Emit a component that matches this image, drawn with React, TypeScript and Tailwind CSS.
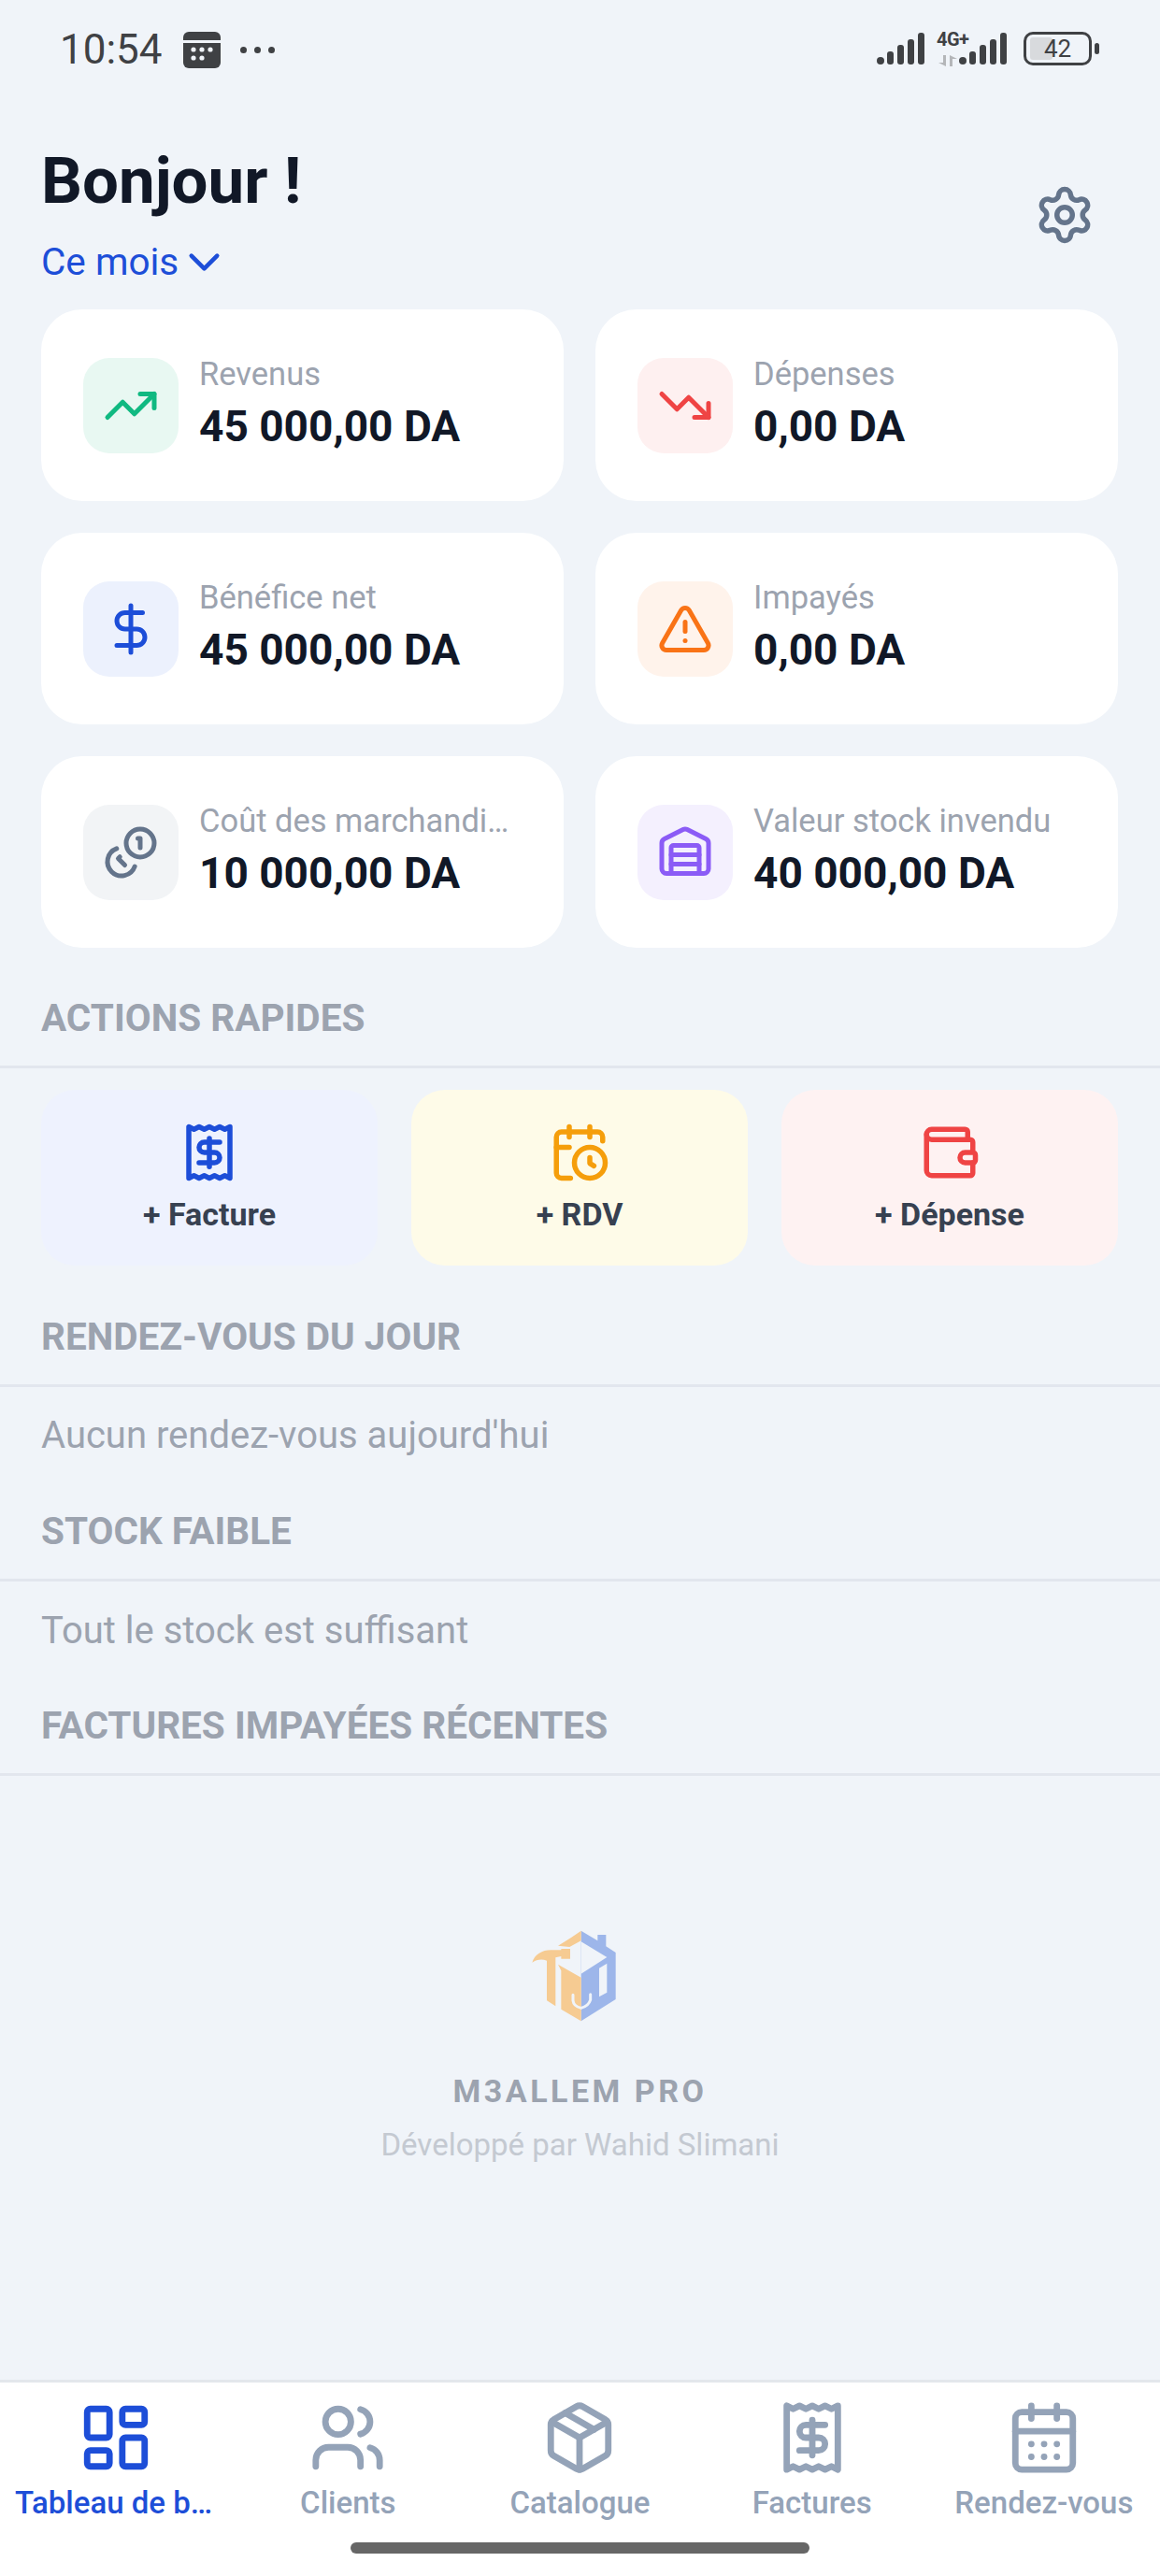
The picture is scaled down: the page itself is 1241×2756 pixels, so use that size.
import {
  CalendarClock,
  CalendarDays,
  ChevronDown,
  DollarSign,
  LayoutDashboard,
  Package,
  Receipt,
  Settings,
  TrendingDown,
  TrendingUp,
  TriangleAlert,
  Users,
  Wallet,
  Warehouse,
  type LucideProps,
} from "lucide-react";

// same strokes as lucide's Coins, but flipped: big coin sits top right
function CoinsFlipped(props: LucideProps) {
  return (
    <svg
      viewBox="0 0 24 24"
      fill="none"
      stroke="currentColor"
      strokeLinecap="round"
      strokeLinejoin="round"
      strokeWidth={2}
      className={props.className}
    >
      <circle cx="16" cy="8" r="6" />
      <path d="M5.91 10.37A6 6 0 1 0 13.66 18" />
      <path d="M15 6h1v4" />
      <path d="m7.29 13.88-.7.71 2.82 2.82" />
    </svg>
  );
}

const stats = [
  { label: "Revenus", value: "45 000,00 DA", Icon: TrendingUp, box: "bg-[#e8f8f2]", color: "text-[#10b981]" },
  { label: "Dépenses", value: "0,00 DA", Icon: TrendingDown, box: "bg-[#fef0f0]", color: "text-[#ef4444]" },
  { label: "Bénéfice net", value: "45 000,00 DA", Icon: DollarSign, box: "bg-[#ecf1fd]", color: "text-[#1d4ed8]" },
  { label: "Impayés", value: "0,00 DA", Icon: TriangleAlert, box: "bg-[#fff3eb]", color: "text-[#f97316]" },
  { label: "Coût des marchandises vendues", value: "10 000,00 DA", Icon: CoinsFlipped, box: "bg-[#f2f4f6]", color: "text-[#64748b]" },
  { label: "Valeur stock invendu", value: "40 000,00 DA", Icon: Warehouse, box: "bg-[#f4f0fe]", color: "text-[#8b5cf6]" },
];

const actions = [
  { label: "+ Facture", Icon: Receipt, box: "bg-[#eef2fe]", color: "text-[#1d4ed8]" },
  { label: "+ RDV", Icon: CalendarClock, box: "bg-[#fefbe8]", color: "text-[#f59e0b]" },
  { label: "+ Dépense", Icon: Wallet, box: "bg-[#fef2f2]", color: "text-[#ef4444]" },
];

const tabs = [
  { label: "Tableau de bord", Icon: LayoutDashboard, active: true },
  { label: "Clients", Icon: Users, active: false },
  { label: "Catalogue", Icon: Package, active: false },
  { label: "Factures", Icon: Receipt, active: false },
  { label: "Rendez-vous", Icon: CalendarDays, active: false },
];

function SignalBars() {
  return (
    <svg viewBox="0 0 52 34" className="h-[34px] w-[52px]" fill="#3f4144">
      <rect x="0" y="26" width="8" height="8" rx="4" />
      <rect x="11" y="20" width="7" height="14" rx="3" />
      <rect x="22" y="13" width="7" height="21" rx="3" />
      <rect x="33" y="7" width="7" height="27" rx="3" />
      <rect x="44" y="0" width="7" height="34" rx="3" />
    </svg>
  );
}

function StatusBar() {
  return (
    <div className="flex h-[78px] items-end justify-between pb-[1px] pl-[64px] pr-[65px] text-[#3f4144]">
      <div className="flex items-center">
        <span className="text-[44px] leading-[48px]">10:54</span>
        <svg viewBox="0 0 40 40" className="ml-[22px] h-[40px] w-[40px]">
          <path d="M0 7a6 6 0 0 1 6-6h28a6 6 0 0 1 6 6v3H0z" fill="#3f4144" />
          <path d="M0 13h40v21a6 6 0 0 1-6 6H6a6 6 0 0 1-6-6z" fill="#3f4144" />
          <g fill="#f0f4f9">
            <circle cx="11" cy="20" r="2.6" />
            <circle cx="20" cy="20" r="2.6" />
            <circle cx="29" cy="20" r="2.6" />
            <circle cx="11" cy="29" r="2.6" />
            <circle cx="20" cy="29" r="2.6" />
          </g>
        </svg>
        <div className="ml-[21px] flex gap-[8px]">
          <span className="h-[7px] w-[7px] rounded-full bg-[#3f4144]" />
          <span className="h-[7px] w-[7px] rounded-full bg-[#3f4144]" />
          <span className="h-[7px] w-[7px] rounded-full bg-[#3f4144]" />
        </div>
      </div>
      <div className="mb-[7px] flex items-center">
        <SignalBars />
        <div className="relative ml-[12px] h-[36px] w-[24px]">
          <span className="absolute left-0 top-[-2px] text-[20px] font-bold leading-[20px] tracking-[-0.5px]">4G+</span>
          <svg viewBox="0 0 20 12" className="absolute bottom-[-1px] left-[2px] h-[12px] w-[20px]" fill="#b4b6b9">
            <path d="M8 0v12L0 8h5V0zM12 12V0l8 4h-5v8z" />
          </svg>
        </div>
        <SignalBars />
        <div className="relative ml-[17px] flex h-[36px] w-[73px] items-center justify-center rounded-[10px] border-[3px] border-[#3f4144] text-[26px] leading-none">
          <span className="absolute bottom-[3px] left-[4px] top-[3px] w-[24px] rounded-[3px] bg-[#d8dadd]" />
          <span className="relative">42</span>
        </div>
        <span className="ml-[3px] h-[12px] w-[5px] rounded-full bg-[#3f4144]" />
      </div>
    </div>
  );
}

function StatCard({ label, value, Icon, box, color }: (typeof stats)[number]) {
  return (
    <div className="flex h-[205px] items-center gap-[22px] rounded-[44px] bg-white pl-[45px] pr-[47px]">
      <div className={`flex h-[102px] w-[102px] shrink-0 items-center justify-center rounded-[28px] ${box}`}>
        <Icon className={`h-[60px] w-[60px] ${color}`} strokeWidth={2} />
      </div>
      <div className="min-w-0 pb-[4px]">
        <div className="truncate text-[34.5px] leading-[44px] text-[#9ca3af]">{label}</div>
        <div className="mt-[4px] text-[46px] font-bold leading-[60px] text-[#111827]">{value}</div>
      </div>
    </div>
  );
}

function SectionTitle({ children }: { children: string }) {
  return (
    <div className="border-b-[3px] border-[#e2e6ee] px-[44px] pb-[26px] pt-[33px] text-[40.5px] font-bold leading-[50px] text-[#9ca3af]">
      {children}
    </div>
  );
}

function Logo() {
  return (
    <svg viewBox="0 0 360 330" className="h-[110px] w-[120px]">
      <path d="M182 20 235 52V33h27v37l31 20v150L182 310Z" fill="#9db6ea" />
      <path d="M182 55 265 105 182 158Z" fill="#f0f4f9" />
      <path d="M240 140 265 125V218L240 232Z" fill="#f0f4f9" />
      <path d="M182 20v32l-37 20-37-4 42-26Z" fill="#f6cb92" />
      <path d="M25 122c8-26 32-40 60-40h33v-4h29v32h-29v-8l-18 4v156l-28-18V116c-16-6-32-4-47 6Z" fill="#f6cb92" />
      <path d="M108 128 182 170V310L118 272V148Z" fill="#f6cb92" />
      <path
        d="M156 226v18q2 18 26 24 24-6 30-26v-18"
        fill="none"
        stroke="#f0f4f9"
        strokeWidth="9"
        strokeLinecap="round"
      />
    </svg>
  );
}

export default function App() {
  return (
    <div className="flex min-h-[2756px] w-[1241px] flex-col bg-[#f0f4f9] [font-family:Roboto,sans-serif]">
      <StatusBar />

      <div className="flex items-center justify-between pl-[44px] pr-[69px] pt-[74px]">
        <div>
          <h1 className="text-[69px] font-bold leading-[84px] text-[#111827]">Bonjour !</h1>
          <div className="mt-[21px] flex h-[46px] items-center text-[40.5px] leading-[46px] text-[#1d4ed8]">
            Ce mois
            <ChevronDown className="h-[55px] w-[55px] shrink-0" strokeWidth={2} />
          </div>
        </div>
        <Settings className="mt-[4px] h-[66px] w-[66px] text-[#64748b]" strokeWidth={2} />
      </div>

      <div className="mt-[28px] grid grid-cols-2 gap-x-[34px] gap-y-[34px] pl-[44px] pr-[45px]">
        {stats.map((s) => (
          <StatCard key={s.label} {...s} />
        ))}
      </div>

      <div className="mt-[17px]">
        <SectionTitle>ACTIONS RAPIDES</SectionTitle>
      </div>
      <div className="mt-[23px] grid grid-cols-3 gap-x-[36px] pl-[44px] pr-[45px]">
        {actions.map(({ label, Icon, box, color }) => (
          <div key={label} className={`flex h-[188px] flex-col items-center justify-center rounded-[36px] ${box}`}>
            <Icon className={`h-[66px] w-[66px] ${color}`} strokeWidth={2} />
            <span className="mt-[11px] text-[34px] font-bold leading-[44px] text-[#374151]">{label}</span>
          </div>
        ))}
      </div>

      <div className="mt-[18px]">
        <SectionTitle>RENDEZ-VOUS DU JOUR</SectionTitle>
      </div>
      <div className="px-[44px] pt-[28px] text-[40px] leading-[48px] text-[#9ca3af]">Aucun rendez-vous aujourd'hui</div>

      <div className="mt-[20px]">
        <SectionTitle>STOCK FAIBLE</SectionTitle>
      </div>
      <div className="px-[44px] pt-[29px] text-[40px] leading-[48px] text-[#9ca3af]">Tout le stock est suffisant</div>

      <div className="mt-[19px]">
        <SectionTitle>FACTURES IMPAYÉES RÉCENTES</SectionTitle>
      </div>

      <div className="flex flex-1 flex-col items-center pt-[159px]">
        <Logo />
        <div className="mt-[46px] text-[34px] font-bold leading-[44px] tracking-[3.5px] text-[#9ca3af]">M3ALLEM PRO</div>
        <div className="mt-[14px] text-[33px] leading-[44px] text-[#c4c9d1]">Développé par Wahid Slimani</div>
      </div>

      <div className="border-t-[3px] border-[#e3e7ec] bg-white">
        <div className="grid h-[171px] grid-cols-5 pt-[18px]">
          {tabs.map(({ label, Icon, active }) => (
            <div key={label} className="flex min-w-0 flex-col items-center px-[16px]">
              <Icon className={`h-[82px] w-[82px] ${active ? "text-[#1d4ed8]" : "text-[#94a3b8]"}`} strokeWidth={2} />
              <span
                className={`mt-[7px] w-full truncate text-center text-[33px] font-medium leading-[44px] ${
                  active ? "text-[#1d4ed8]" : "text-[#94a3b8]"
                }`}
              >
                {label}
              </span>
            </div>
          ))}
        </div>
        <div className="flex h-[36px] justify-center">
          <div className="h-[12px] w-[491px] rounded-full bg-[#666666]" />
        </div>
      </div>
    </div>
  );
}
